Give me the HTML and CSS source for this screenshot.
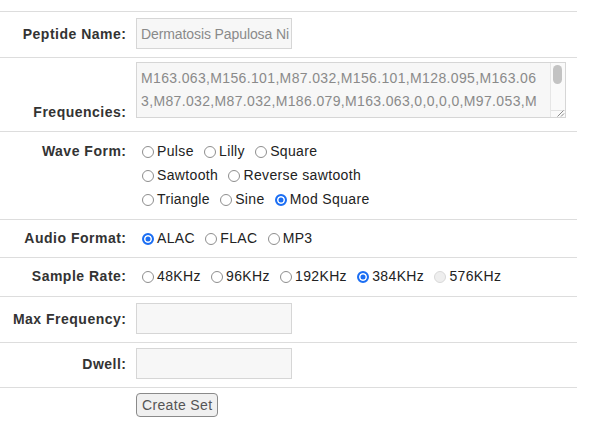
FILE: index.html
```html
<!DOCTYPE html>
<html lang="en">
<head>
<meta charset="utf-8">
<title>Create Set</title>
<link rel="stylesheet" href="styles.css">
</head>
<body>
<form class="set-form">
<table class="form-table">
  <colgroup><col class="col-label"><col class="col-value"></colgroup>
  <tr class="row-input">
    <td class="label">Peptide Name:</td>
    <td class="value"><input class="field" type="text" value="Dermatosis Papulosa Nigra" readonly></td>
  </tr>
  <tr class="row-text">
    <td class="label">Frequencies:</td>
    <td class="value">
      <div class="ta-wrap">
        <textarea class="freqs" readonly>M163.063,M156.101,M87.032,M156.101,M128.095,M163.063,M87.032,M87.032,M186.079,M163.063,0,0,0,0,M97.053,M128.095,M71.037,M57.021,M128.095,M99.068,M101.048,M128.095,M87.032</textarea>
        <div class="ta-track" aria-hidden="true">
          <div class="ta-thumb"></div>
          <div class="ta-corner">
            <svg class="ta-grip" width="9" height="7" viewBox="0 0 9 7"><path d="M1.5 6.5 L7.5 0.5 M5 6.5 L8 3.5" stroke="#8a8a8a" stroke-width="1" fill="none"/></svg>
          </div>
        </div>
      </div>
    </td>
  </tr>
  <tr class="row-wave">
    <td class="label">Wave Form:</td>
    <td class="value">
      <div class="opts"><input type="radio" name="wave" id="w1"><label for="w1">Pulse</label> <input type="radio" name="wave" id="w2"><label for="w2">Lilly</label> <input type="radio" name="wave" id="w3"><label for="w3">Square</label></div>
      <div class="opts"><input type="radio" name="wave" id="w4"><label for="w4">Sawtooth</label> <input type="radio" name="wave" id="w5"><label for="w5">Reverse sawtooth</label></div>
      <div class="opts"><input type="radio" name="wave" id="w6"><label for="w6">Triangle</label> <input type="radio" name="wave" id="w7"><label for="w7">Sine</label> <input type="radio" name="wave" id="w8" checked><label for="w8">Mod Square</label></div>
    </td>
  </tr>
  <tr class="row-radio">
    <td class="label">Audio Format:</td>
    <td class="value"><div class="opts one"><input type="radio" name="fmt" id="f1" checked><label for="f1">ALAC</label> <input type="radio" name="fmt" id="f2"><label for="f2">FLAC</label> <input type="radio" name="fmt" id="f3"><label for="f3">MP3</label></div></td>
  </tr>
  <tr class="row-radio row-rate">
    <td class="label">Sample Rate:</td>
    <td class="value"><div class="opts one"><input type="radio" name="rate" id="r1"><label for="r1">48KHz</label> <input type="radio" name="rate" id="r2"><label for="r2">96KHz</label> <input type="radio" name="rate" id="r3"><label for="r3">192KHz</label> <input type="radio" name="rate" id="r4" checked><label for="r4">384KHz</label> <input type="radio" name="rate" id="r5" disabled><label for="r5">576KHz</label></div></td>
  </tr>
  <tr class="row-input">
    <td class="label">Max Frequency:</td>
    <td class="value"><input class="field" type="text"></td>
  </tr>
  <tr class="row-input row-dwell">
    <td class="label">Dwell:</td>
    <td class="value"><input class="field" type="text"></td>
  </tr>
  <tr class="row-button">
    <td class="label"></td>
    <td class="value"><button type="button" class="btn">Create Set</button></td>
  </tr>
</table>
</form>
</body>
</html>
```

FILE: styles.css
```css
html, body {
  margin: 0;
  padding: 0;
  background: #fff;
}

body {
  font-family: "Liberation Sans", Arial, Helvetica, sans-serif;
  font-size: 14px;
  color: #333;
}

.set-form {
  margin: 0;
  padding-top: 11px;
}

.form-table {
  width: 577px;
  border-collapse: collapse;
  table-layout: fixed;
}

.col-label { width: 131px; }

.form-table td {
  border-top: 1px solid #dddddd;
  vertical-align: baseline;
  padding: 6px 0 8px 5px;
  line-height: 20px;
}

.form-table td.label {
  text-align: right;
  font-weight: bold;
  letter-spacing: 0.5px;
  color: #333;
  padding-left: 0;
  padding-right: 4.5px;
  white-space: nowrap;
}

.row-text td { padding-top: 4px; padding-bottom: 13px; }
.row-text td.label { vertical-align: bottom; padding-bottom: 9px; }
.row-wave td { padding-top: 7px; padding-bottom: 8px; line-height: 24px; }
.row-radio td { padding-top: 7px; padding-bottom: 7px; line-height: 23px; }
.row-rate td { padding-bottom: 8px; }
.row-dwell td { padding-top: 5px; }
.row-button td { padding-top: 5px; padding-bottom: 6px; }

.field {
  display: inline-block;
  box-sizing: border-box;
  width: 156px;
  height: 31px;
  margin: 0;
  padding: 0 2px 0 4px;
  border: 1px solid #d6d6d6;
  border-radius: 0;
  background: #f7f7f7;
  font-family: "Liberation Sans", Arial, sans-serif;
  font-size: 14px;
  letter-spacing: -0.1px;
  color: #8a8a8a;
  outline: none;
}

.ta-wrap {
  position: relative;
  width: 430px;
  height: 56px;
}

.freqs {
  display: block;
  box-sizing: border-box;
  width: 430px;
  height: 56px;
  margin: 0;
  padding: 4px 23px 4px 4px;
  border: 1px solid #d6d6d6;
  border-radius: 0;
  background: #f7f7f7;
  font-family: "Liberation Sans", Arial, sans-serif;
  font-size: 14px;
  letter-spacing: 0.35px;
  line-height: 23px;
  color: #8a8a8a;
  word-break: break-all;
  overflow: hidden;
  resize: none;
  outline: none;
}

.ta-track {
  position: absolute;
  top: 1px;
  right: 1px;
  bottom: 1px;
  width: 14px;
  background: #fafafa;
  border-left: 1px solid #e6e6e6;
}

.ta-thumb {
  position: absolute;
  top: 2px;
  left: 2px;
  width: 9px;
  height: 19px;
  border-radius: 5px;
  background: #c3c3c3;
}

.ta-corner {
  position: absolute;
  left: 0;
  right: 0;
  bottom: 0;
  height: 6px;
  border-top: 1px solid #e2e2e2;
}

.ta-grip {
  position: absolute;
  right: 0;
  bottom: 0;
  display: block;
}

.opts {
  white-space: nowrap;
  color: #222;
  letter-spacing: 0.35px;
}

.opts label { color: #222; }

.opts input[type="radio"] {
  -webkit-appearance: none;
  appearance: none;
  box-sizing: border-box;
  width: 12px;
  height: 12px;
  margin: 0 3px 0 6px;
  border: 1px solid #8e8e8e;
  border-radius: 50%;
  background: #fff;
  vertical-align: -1.5px;
}

.opts input[type="radio"]:checked {
  border: 2px solid #1b6ef3;
  background: #1b6ef3;
  box-shadow: inset 0 0 0 1.5px #fff;
}

.opts input[type="radio"]:disabled {
  border-color: #d9d9d9;
  background: #eeeeee;
}

.btn {
  box-sizing: border-box;
  height: 24px;
  margin: 0;
  padding: 0 5px;
  border: 1px solid #8a8a8a;
  border-radius: 4px;
  background: #f0f0f0;
  font-family: "Liberation Sans", Arial, sans-serif;
  font-size: 14px;
  letter-spacing: 0.35px;
  color: #555;
  vertical-align: baseline;
}
```
